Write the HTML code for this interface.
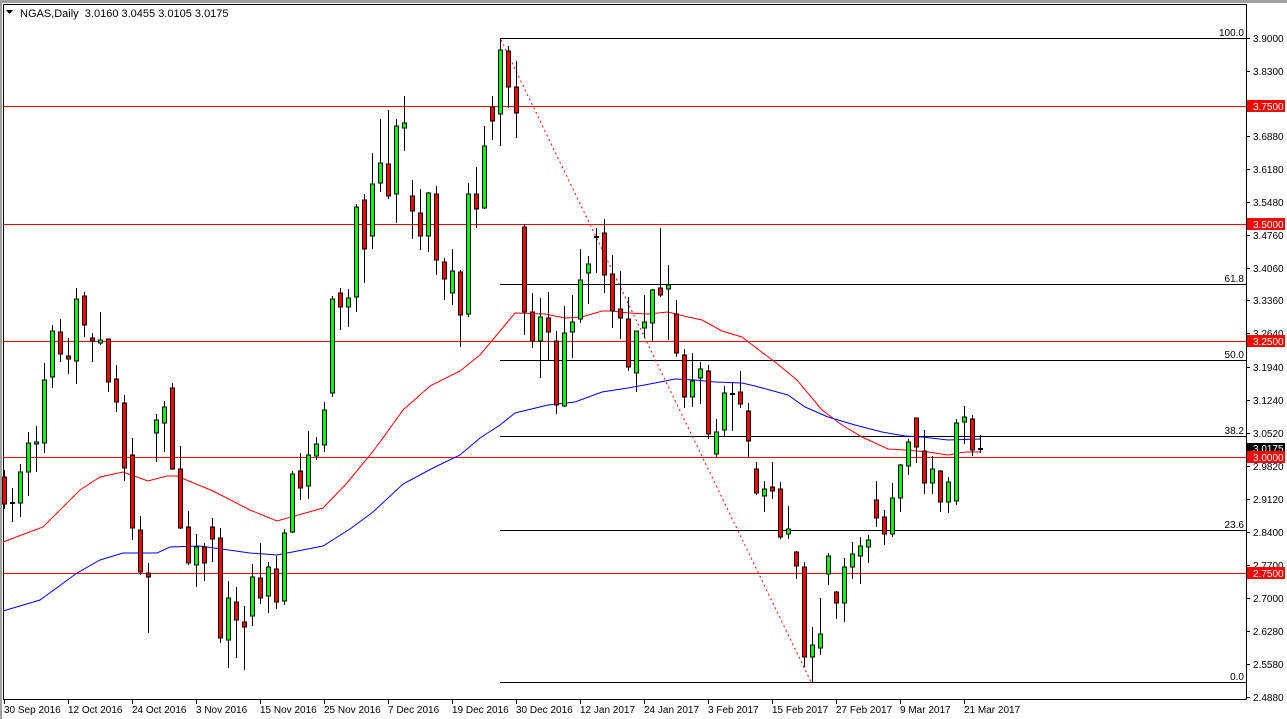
<!DOCTYPE html>
<html><head><meta charset="utf-8"><style>
html,body{margin:0;padding:0;background:#fff;width:1287px;height:719px;overflow:hidden}
svg{display:block;font-family:"Liberation Sans",sans-serif;font-size:10px}
</style></head><body>
<svg width="1287" height="719" viewBox="0 0 1287 719" xmlns="http://www.w3.org/2000/svg">
<rect x="0" y="0" width="1287" height="719" fill="#fff"/>
<rect x="0" y="0" width="1287" height="3" fill="#a0a0a0"/>
<rect x="0" y="0" width="2" height="719" fill="#a0a0a0"/>
<path d="M3.5 4.5H1246.5V699.5M3.5 4.5V699.5H1246.5" fill="none" stroke="#000" stroke-width="1"/>
<path d="M3 106.5H1246M3 224.5H1246M3 341.5H1246M3 457.5H1246M3 573.5H1246" stroke="#ff0000" stroke-width="1"/>
<path d="M500 38.5H1246M500 284.5H1246M500 360.5H1246M500 436.5H1246M500 530.5H1246M500 682.5H1246" stroke="#000" stroke-width="1"/>
<g fill="#000" text-anchor="end">
<text x="1244" y="36">100.0</text><text x="1244" y="282">61.8</text><text x="1244" y="358">50.0</text><text x="1244" y="434">38.2</text><text x="1244" y="528">23.6</text><text x="1244" y="680">0.0</text>
</g>
<polyline fill="none" stroke="#ff0000" stroke-width="1" points="3,542 43,527 80,490 100,477 123,472 148,481 167,476 177,476 213,491 250,510 277,521 323,508 347,483 370,455 380,442 403,410 430,386 460,371 480,355 500,331 515,313 545,314 565,318 582,317 602,311 612,311 628,313 648,314 668,312 688,317 702,320 722,331 742,337 755,347 775,362 797,380 822,410 842,425 862,437 888,449 905,450 928,452 948,455 965,452 980,452"/>
<polyline fill="none" stroke="#0000ff" stroke-width="1" points="3,611 40,600 77,573 100,560 123,553 157,553 170,547 200,546 250,553 277,555 323,546 350,529 373,512 403,484 433,468 460,455 480,438 500,425 515,413 548,405 575,402 602,392 628,388 655,383 675,379 695,380 715,382 742,383 755,386 788,395 805,407 828,417 855,425 882,432 905,436 922,437 948,440 980,439"/>
<line x1="501" y1="40" x2="811" y2="682" stroke="#ff0000" stroke-width="1" stroke-dasharray="2,3"/>
<path stroke="#000" stroke-width="1" fill="none" d="M4.5 470V509M12.5 488V522M20.5 464V517M28.5 432V496M36.5 426V472M44.5 363V453M52.5 325V388M60.5 319V362M68.5 338V374M76.5 288V384M84.5 292V337M92.5 333V362M100.5 312V345M108.5 339V392M116.5 365V412M124.5 395V481M132.5 438V540M140.5 516V575M148.5 563V633M156.5 414V462M164.5 401V452M172.5 383V470M180.5 446V529M188.5 511V565M196.5 534V587M204.5 543V581M212.5 518V562M220.5 528V643M228.5 581V668M236.5 587V658M244.5 606V670M252.5 564V626M260.5 543V604M268.5 562V613M276.5 556V609M284.5 529V605M292.5 471V533M300.5 453V500M308.5 431V499M316.5 437V460M324.5 402V452M332.5 296V397M340.5 288V330M348.5 289V327M356.5 204V312M364.5 194V283M372.5 153V249M380.5 119V192M388.5 110V199M396.5 119V223M404.5 96V151M412.5 180V239M420.5 189V250M428.5 192V252M436.5 186V275M444.5 258V300M452.5 249V305M460.5 270V347M468.5 183V317M476.5 167V228M484.5 126V209M492.5 96V140M500.5 38V146M508.5 46V108M516.5 61V138M524.5 224V335M532.5 293V348M540.5 298V378M548.5 292V360M556.5 331V414M564.5 306V407M572.5 295V358M580.5 249V323M588.5 256V304M596.5 228V273M604.5 219V293M612.5 255V328M620.5 271V339M628.5 297V371M636.5 331V392M644.5 295V338M652.5 289V342M660.5 228V297M668.5 265V340M676.5 300V357M684.5 349V408M692.5 353V407M700.5 362V404M708.5 365V439M716.5 419V457M724.5 386V436M732.5 383V431M740.5 371V408M748.5 403V457M756.5 462V495M764.5 481V512M772.5 462V499M780.5 482V539M788.5 506V539M796.5 551V579M804.5 562V667M812.5 627V682M820.5 598V655M828.5 553V585M836.5 591V619M844.5 558V622M852.5 542V579M860.5 537V584M868.5 535V563M876.5 481V527M884.5 510V545M892.5 483V537M900.5 464V512M908.5 439V475M916.5 418V463M924.5 430V494M932.5 456V494M940.5 470V512M948.5 477V513M956.5 419V505M964.5 406V444M972.5 415V456M980.5 435V453"/>
<path fill="#00ff00" stroke="#000" stroke-width="1" d="M18.5 472h4V503h-4zM26.5 443h4V472h-4zM34.5 442h4V444h-4zM42.5 380h4V443h-4zM50.5 331h4V377h-4zM74.5 299h4V361h-4zM98.5 340h4V343h-4zM154.5 420h4V433h-4zM162.5 407h4V423h-4zM194.5 547h4V565h-4zM226.5 598h4V640h-4zM250.5 577h4V616h-4zM266.5 567h4V596h-4zM282.5 533h4V601h-4zM290.5 474h4V532h-4zM306.5 455h4V486h-4zM314.5 444h4V456h-4zM322.5 410h4V445h-4zM330.5 299h4V393h-4zM346.5 298h4V307h-4zM354.5 207h4V297h-4zM370.5 184h4V236h-4zM378.5 163h4V183h-4zM394.5 126h4V194h-4zM402.5 123h4V128h-4zM426.5 193h4V236h-4zM450.5 271h4V293h-4zM466.5 194h4V314h-4zM482.5 146h4V208h-4zM498.5 50h4V114h-4zM538.5 317h4V341h-4zM562.5 333h4V406h-4zM570.5 322h4V332h-4zM578.5 280h4V319h-4zM586.5 264h4V273h-4zM634.5 331h4V373h-4zM642.5 322h4V328h-4zM650.5 290h4V323h-4zM666.5 285h4V289h-4zM690.5 381h4V397h-4zM698.5 369h4V378h-4zM714.5 432h4V454h-4zM722.5 393h4V430h-4zM762.5 489h4V496h-4zM786.5 529h4V534h-4zM810.5 645h4V657h-4zM818.5 634h4V648h-4zM826.5 556h4V574h-4zM842.5 567h4V603h-4zM850.5 554h4V567h-4zM858.5 546h4V556h-4zM866.5 540h4V547h-4zM890.5 498h4V534h-4zM898.5 465h4V498h-4zM906.5 442h4V466h-4zM930.5 469h4V483h-4zM946.5 482h4V502h-4zM954.5 423h4V501h-4zM962.5 417h4V422h-4z"/>
<path fill="#ff0000" stroke="#000" stroke-width="1" d="M2.5 477h4V504h-4zM58.5 332h4V354h-4zM66.5 356h4V359h-4zM82.5 296h4V325h-4zM90.5 338h4V341h-4zM106.5 339h4V382h-4zM114.5 379h4V402h-4zM122.5 403h4V468h-4zM130.5 455h4V528h-4zM138.5 530h4V572h-4zM146.5 573h4V577h-4zM170.5 388h4V469h-4zM178.5 469h4V528h-4zM186.5 527h4V563h-4zM202.5 547h4V563h-4zM210.5 527h4V539h-4zM218.5 538h4V638h-4zM234.5 602h4V620h-4zM242.5 622h4V627h-4zM258.5 578h4V598h-4zM274.5 569h4V602h-4zM298.5 471h4V488h-4zM338.5 293h4V307h-4zM362.5 200h4V249h-4zM386.5 164h4V196h-4zM410.5 196h4V211h-4zM418.5 213h4V236h-4zM434.5 194h4V260h-4zM442.5 262h4V279h-4zM458.5 272h4V315h-4zM474.5 194h4V209h-4zM490.5 107h4V121h-4zM506.5 51h4V87h-4zM514.5 87h4V113h-4zM522.5 227h4V312h-4zM530.5 312h4V341h-4zM546.5 318h4V332h-4zM554.5 341h4V405h-4zM602.5 233h4V275h-4zM610.5 274h4V311h-4zM618.5 309h4V318h-4zM626.5 319h4V367h-4zM658.5 288h4V295h-4zM674.5 314h4V353h-4zM682.5 355h4V397h-4zM706.5 371h4V434h-4zM738.5 392h4V404h-4zM746.5 411h4V441h-4zM754.5 469h4V493h-4zM770.5 487h4V491h-4zM778.5 489h4V537h-4zM794.5 552h4V566h-4zM802.5 567h4V657h-4zM834.5 592h4V603h-4zM874.5 500h4V518h-4zM882.5 517h4V534h-4zM914.5 418h4V447h-4zM922.5 451h4V483h-4zM938.5 471h4V502h-4zM970.5 419h4V450h-4z"/>
<path stroke="#000" stroke-width="2" d="M10 503H15M594 237H599M730 394H735M978 449H983"/>
<path d="M6 10h7l-3.5 4z" fill="#000"/>
<text x="20" y="17" fill="#000" style="font-size:11px">NGAS,Daily&#160; 3.0160 3.0455 3.0105 3.0175</text>
<path stroke="#000" stroke-width="1" d="M1246 38.5h4M1246 71.5h4M1246 104.5h4M1246 136.5h4M1246 169.5h4M1246 202.5h4M1246 235.5h4M1246 268.5h4M1246 300.5h4M1246 333.5h4M1246 367.5h4M1246 400.5h4M1246 433.5h4M1246 466.5h4M1246 499.5h4M1246 532.5h4M1246 565.5h4M1246 598.5h4M1246 631.5h4M1246 664.5h4M1246 697.5h4"/>
<g fill="#000">
<text x="1253" y="42">3.9000</text><text x="1253" y="75">3.8300</text><text x="1253" y="140">3.6880</text><text x="1253" y="173">3.6180</text><text x="1253" y="206">3.5480</text><text x="1253" y="239">3.4760</text><text x="1253" y="272">3.4060</text><text x="1253" y="304">3.3360</text><text x="1253" y="337">3.2640</text><text x="1253" y="371">3.1940</text><text x="1253" y="404">3.1240</text><text x="1253" y="437">3.0520</text><text x="1253" y="470">2.9820</text><text x="1253" y="503">2.9120</text><text x="1253" y="536">2.8400</text><text x="1253" y="569">2.7700</text><text x="1253" y="602">2.7000</text><text x="1253" y="635">2.6280</text><text x="1253" y="668">2.5580</text><text x="1253" y="701">2.4880</text>
</g>
<g>
<rect x="1247" y="100" width="38" height="12" fill="#ff0000"/><text x="1253" y="110" fill="#fff">3.7500</text>
<rect x="1247" y="218" width="38" height="12" fill="#ff0000"/><text x="1253" y="228" fill="#fff">3.5000</text>
<rect x="1247" y="335" width="38" height="12" fill="#ff0000"/><text x="1253" y="345" fill="#fff">3.2500</text>
<rect x="1247" y="443" width="38" height="8" fill="#000"/><text x="1253" y="452" fill="#fff">3.0175</text>
<rect x="1247" y="451" width="38" height="12" fill="#ff0000"/><text x="1253" y="461" fill="#fff">3.0000</text>
<rect x="1247" y="567" width="38" height="12" fill="#ff0000"/><text x="1253" y="577" fill="#fff">2.7500</text>
</g>
<path stroke="#000" stroke-width="1" d="M4.5 699v5M68.5 699v5M132.5 699v5M196.5 699v5M260.5 699v5M324.5 699v5M388.5 699v5M452.5 699v5M516.5 699v5M580.5 699v5M644.5 699v5M708.5 699v5M772.5 699v5M836.5 699v5M900.5 699v5M964.5 699v5"/>
<g fill="#000">
<text x="4" y="713">30 Sep 2016</text><text x="68" y="713">12 Oct 2016</text><text x="132" y="713">24 Oct 2016</text><text x="196" y="713">3 Nov 2016</text><text x="260" y="713">15 Nov 2016</text><text x="324" y="713">25 Nov 2016</text><text x="388" y="713">7 Dec 2016</text><text x="452" y="713">19 Dec 2016</text><text x="516" y="713">30 Dec 2016</text><text x="580" y="713">12 Jan 2017</text><text x="644" y="713">24 Jan 2017</text><text x="708" y="713">3 Feb 2017</text><text x="772" y="713">15 Feb 2017</text><text x="836" y="713">27 Feb 2017</text><text x="900" y="713">9 Mar 2017</text><text x="964" y="713">21 Mar 2017</text>
</g>
</svg>
</body></html>
